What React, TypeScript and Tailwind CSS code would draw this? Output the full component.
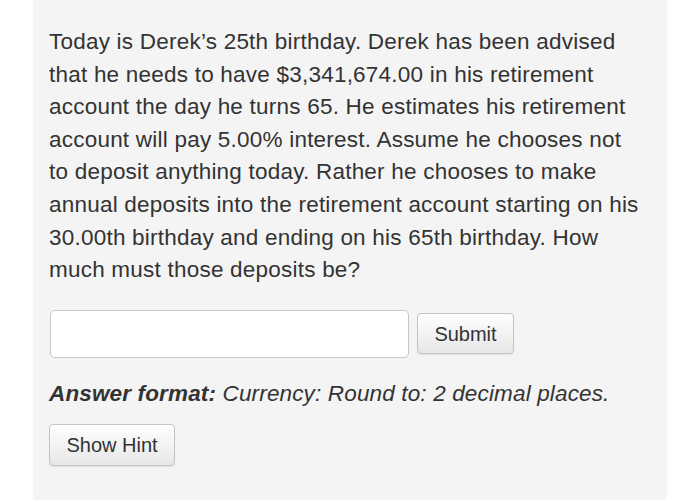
import React from 'react'

const lines = [
  'Today is Derek’s 25th birthday. Derek has been advised',
  'that he needs to have $3,341,674.00 in his retirement',
  'account the day he turns 65. He estimates his retirement',
  'account will pay 5.00% interest. Assume he chooses not',
  'to deposit anything today. Rather he chooses to make',
  'annual deposits into the retirement account starting on his',
  '30.00th birthday and ending on his 65th birthday. How',
  'much must those deposits be?',
]

export default function App() {
  return (
    <div className="w-[700px] h-[502px] bg-white font-['Liberation_Sans',Arial,sans-serif] text-[#333]">
      <div className="ml-[33px] w-[634px] h-[500px] bg-[#f4f4f4] rounded-br-[4px] px-[16px] pt-[26px]">
        <p className="text-[22.5px] leading-[32.6px] tracking-[0.22px]">
          {lines.map((l, i) => (
            <span key={i} className="block whitespace-nowrap">
              {l}
            </span>
          ))}
        </p>

        <div className="mt-[23px] flex items-center gap-[8px]">
          <input
            type="text"
            className="w-[359px] h-[48px] ml-[1px] rounded-[5px] border border-[#c8c8c8] bg-white outline-none"
          />
          <button
            type="button"
            className="w-[97px] h-[41px] rounded-[4px] border border-[#c4c4c4] bg-gradient-to-b from-white to-[#e6e6e6] text-[20px] text-[#333] shadow-[0_1px_1px_rgba(0,0,0,0.08)]"
          >
            Submit
          </button>
        </div>

        <p className="mt-[20px] text-[22.5px] leading-[32px] italic tracking-[0.15px]">
          <span className="font-bold">Answer format:</span> Currency: Round to: 2 decimal places.
        </p>

        <button
          type="button"
          className="mt-[14px] w-[126px] h-[42px] rounded-[4px] border border-[#c4c4c4] bg-gradient-to-b from-white to-[#e6e6e6] text-[20px] text-[#333] shadow-[0_1px_1px_rgba(0,0,0,0.08)]"
        >
          Show Hint
        </button>
      </div>
    </div>
  )
}
